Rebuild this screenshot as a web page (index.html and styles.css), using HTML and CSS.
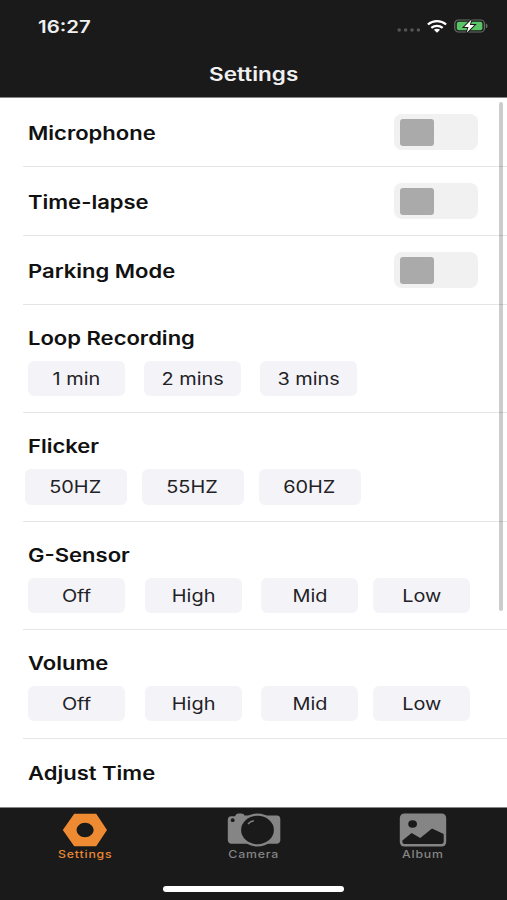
FILE: index.html
```html
<!DOCTYPE html>
<html lang="en">
<head>
<meta charset="utf-8">
<title>Settings</title>
<link rel="stylesheet" href="styles.css">
</head>
<body>
<div class="phone">
  <header class="header">
    <div class="status">
      <span class="time"><span class="wide">16:27</span></span>
      <span class="status-icons">
        <svg class="dots" width="24" height="6" viewBox="0 0 24 6" fill="#555"><circle cx="2.2" cy="3" r="1.8"/><circle cx="8.6" cy="3" r="1.8"/><circle cx="15" cy="3" r="1.8"/><circle cx="21.4" cy="3" r="1.8"/></svg>
        <svg class="wifi" width="20" height="13" viewBox="0 0 20 13" fill="none" stroke="#fff" stroke-width="2.3"><path d="M.9 4.5C6 .1 14 .1 19.1 4.5"/><path d="M4.3 7.8C7.6 5.1 12.4 5.1 15.7 7.8"/><path d="M6.9 9.8Q10 7.7 13.1 9.8L10 12.7Z" fill="#fff" stroke="none"/></svg>
        <svg class="battery" width="34" height="16" viewBox="0 0 34 16"><rect x=".8" y="2" width="29.6" height="12" rx="3.6" fill="none" stroke="#667066" stroke-width="1.2"/><rect x="2.8" y="3.8" width="25.6" height="8.4" rx="2" fill="#5bc466"/><path d="M31.8 5.6Q33.6 6 33.6 8T31.8 10.4Z" fill="#667066"/><path d="M17.5 1.4L10.2 9H14.6L12.6 14.8L20.4 6.9H15.8Z" fill="#fff" stroke="#1a1a1a" stroke-width="2" paint-order="stroke"/></svg>
      </span>
    </div>
    <h1 class="title"><span class="wide">Settings</span></h1>
  </header>
  <main class="list">
    <section class="row upper"><h2 class="label"><span class="wide">Microphone</span></h2><span class="toggle"><i class="knob"></i></span></section>
    <section class="row upper"><h2 class="label"><span class="wide">Time-lapse</span></h2><span class="toggle"><i class="knob"></i></span></section>
    <section class="row upper"><h2 class="label"><span class="wide">Parking Mode</span></h2><span class="toggle"><i class="knob"></i></span></section>
    <section class="group"><h2 class="label"><span class="wide">Loop Recording</span></h2>
      <div class="options loop"><button><span class="wide">1 min</span></button><button><span class="wide">2 mins</span></button><button><span class="wide">3 mins</span></button></div></section>
    <section class="group tall"><h2 class="label"><span class="wide">Flicker</span></h2>
      <div class="options hertz"><button><span class="wide">50HZ</span></button><button><span class="wide">55HZ</span></button><button><span class="wide">60HZ</span></button></div></section>
    <section class="group"><h2 class="label"><span class="wide">G-Sensor</span></h2>
      <div class="options levels"><button><span class="wide">Off</span></button><button><span class="wide">High</span></button><button><span class="wide">Mid</span></button><button><span class="wide">Low</span></button></div></section>
    <section class="group tall"><h2 class="label"><span class="wide">Volume</span></h2>
      <div class="options levels"><button><span class="wide">Off</span></button><button><span class="wide">High</span></button><button><span class="wide">Mid</span></button><button><span class="wide">Low</span></button></div></section>
    <section class="row last"><h2 class="label"><span class="wide">Adjust Time</span></h2></section>
    <div class="scrollbar"></div>
  </main>
  <footer class="footer">
    <nav class="tabs">
      <a class="tab active">
        <svg width="46" height="34" viewBox="0 0 46 34"><path fill="#ee8a32" fill-rule="evenodd" d="M12.2.8H34.2L45 17L34.2 33.2H12.2L.8 17ZM23 9.7C18.4 9.7 14.6 13 14.6 17S18.4 24.2 23 24.2S31.6 21 31.6 17S27.6 9.7 23 9.7Z"/></svg>
        <span class="wide">Settings</span></a>
      <a class="tab">
        <svg width="54" height="34" viewBox="0 0 54 34"><path fill="#858585" d="M4 3.2H8Q9 .8 11 .6H14.5Q17 .8 17.5 2.4H50Q53.3 2.8 53.3 6V27.5Q53 30.6 49.5 30.8H4.5Q1 30.6.8 27V6.5Q1 3.6 4 3.2Z"/><ellipse cx="30.5" cy="17" rx="18.4" ry="16.6" fill="#858585"/><ellipse cx="30.5" cy="17" rx="16.4" ry="14.2" fill="#1a1a1a"/><circle cx="5.7" cy="7.2" r="1.9" fill="#1a1a1a"/><path d="M21 11Q23 8.4 26.8 7.8" stroke="#858585" stroke-width="1.4" fill="none"/></svg>
        <span class="wide">Camera</span></a>
      <a class="tab album">
        <svg width="48" height="34" viewBox="0 0 48 34"><rect x=".8" y=".5" width="46.4" height="33" rx="4.5" fill="#858585"/><ellipse cx="13.6" cy="11" rx="4.4" ry="3.8" fill="#1a1a1a"/><path fill="#1a1a1a" d="M3.4 27.5L12.6 20L21.3 25L33 15.5L44.7 21V29Q44.5 31 42.2 31H5.5Q3.4 31 3.4 29Z"/></svg>
        <span class="wide">Album</span></a>
    </nav>
    <div class="home"></div>
  </footer>
</div>
</body>
</html>
```
FILE: styles.css
```css
* { box-sizing: border-box; margin: 0; padding: 0; }
body { font-family: Inter, "Liberation Sans", sans-serif; background: #fff; color: #111; }
.phone { width: 507px; height: 900px; overflow: hidden; display: flex; flex-direction: column; }
.wide { display: inline-block; transform: scaleX(1.17); white-space: nowrap; }
.header { height: 98px; background: #1a1a1a; color: #f0f0f0; border-bottom: 1px solid #858585; }
.status { height: 52px; display: flex; justify-content: space-between; padding: 0 19px 0 38px; align-items: center; }
.time { font-size: 17px; font-weight: 600; padding-top: 1px; }
.time .wide { transform: scaleX(1.2); transform-origin: left; }
.status-icons { display: flex; align-items: center; }
.dots { margin: 8px 6px 0 0; }
.wifi { margin-right: 7px; }
.title { font-size: 18.5px; font-weight: 600; line-height: 44px; text-align: center; }
.title .wide { transform: scaleX(1.215); }
.list { height: 709px; position: relative; padding-left: 23px; }
.row, .group { border-bottom: 1px solid #e5e5e7; padding-left: 5px; height: 69px; }
.row { display: flex; align-items: center; justify-content: space-between; padding-right: 29px; }
.upper .label { padding-top: 1px; }
.group { height: 108px; padding-top: 21px; }
.tall { height: 109px; }
.last { border: 0; padding-bottom: 2px; }
.label { font-size: 18.5px; line-height: 24px; font-weight: 600; }
.label .wide { transform: scaleX(1.19); transform-origin: left; }
.toggle { width: 84px; height: 36px; border-radius: 8px; background: #f1f1f1; padding: 5px 6px; }
.knob { display: block; width: 34px; height: 27px; border-radius: 3px; background: #aaa; }
.options { display: flex; margin-top: 11px; }
.options button { width: 97px; height: 35px; border: 0; border-radius: 6px; background: #f4f4f8; color: #222226; font: 400 17px/35px Inter, "Liberation Sans", sans-serif; padding-top: 1px; }
.loop { gap: 19px; }
.hertz { margin-left: -3px; gap: 15px; }
.hertz button { width: 102px; height: 36px; padding-right: 2px; }
.levels button + button { margin-left: 20px; }
.levels button:nth-child(3) { margin-left: 19px; }
.levels button:nth-child(4) { margin-left: 15px; }
.scrollbar { position: absolute; right: 4px; top: 4px; width: 4px; height: 509px; border-radius: 2px; background: rgba(0, 0, 0, .2); }
.footer { height: 93px; background: #1a1a1a; border-top: 1px solid #858585; display: flex; flex-direction: column; align-items: center; }
.tabs { width: 100%; display: grid; grid-template-columns: repeat(3, 1fr); height: 78px; padding-top: 5px; }
.tab { display: flex; flex-direction: column; align-items: center; color: #858585; font-size: 10.5px; line-height: 14px; font-weight: 500; }
.tab .wide { margin-top: 1px; letter-spacing: .7px; margin-right: -.7px; }
.tab.album { padding-left: 1px; }
.tab.active { color: #e98733; }
.home { width: 181px; height: 6px; border-radius: 3px; background: #fff; }
```
